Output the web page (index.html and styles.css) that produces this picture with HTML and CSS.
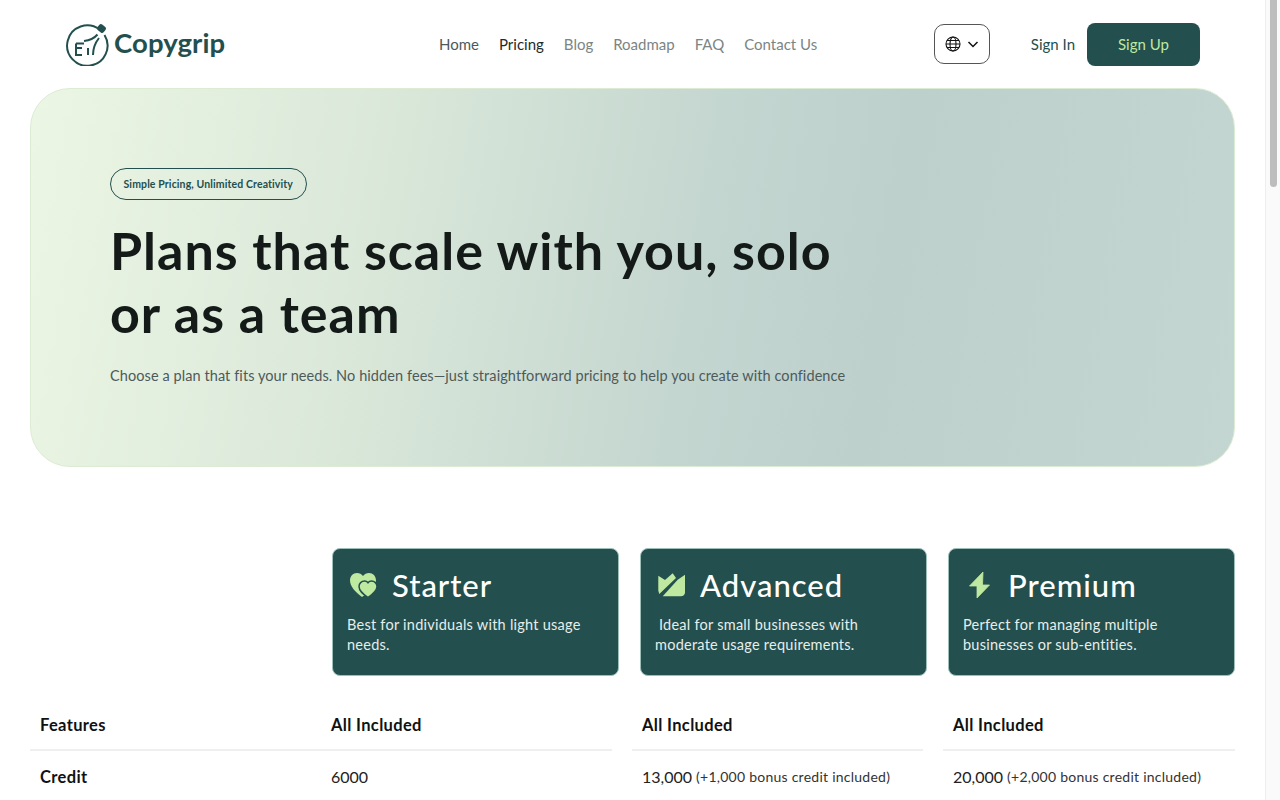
FILE: index.html
```html
<!DOCTYPE html>
<html lang="en">

<head>
    <meta charset="UTF-8">
    <meta name="viewport" content="width=device-width, initial-scale=1.0">
    <title>Copygrip Pricing</title>
    <link rel="stylesheet" href="styles.css">
</head>

<body>

    <header class="header">
        <a class="logo" href="#">
            <svg class="logo-mark" viewBox="0 0 44 44" width="44" height="44" fill="none" stroke="#234f4e" stroke-width="2">
                <path d="M34.5 7.5A20.2 20.2 0 1 0 39.5 13" />
                <path d="M11 21.5H19M11 21.5V26H17M11 26V33H17" />
                <path d="M19 19C24 18.5 29 16.5 32.5 12.5" />
                <path d="M23 26V33" />
                <path d="M28 33C28 27 30 21 34 16" />
                <rect x="32.5" y="3" width="8" height="7" rx="2" transform="rotate(40 36.5 6.5)" fill="#234f4e" stroke="none" />
            </svg>
            <span class="logo-text">Copygrip</span>
        </a>

        <nav class="nav">
            <a href="#">Home</a>
            <a href="#" class="active">Pricing</a>
            <a href="#" class="muted">Blog</a>
            <a href="#" class="muted">Roadmap</a>
            <a href="#" class="muted">FAQ</a>
            <a href="#" class="muted">Contact Us</a>
        </nav>

        <button class="lang-button">
            <svg viewBox="0 0 16 16" width="16" height="16" fill="none" stroke="#111" stroke-width="1.1">
                <circle cx="8" cy="8" r="7" />
                <ellipse cx="8" cy="8" rx="3" ry="7" />
                <path d="M1 8H15M2 4.5H14M2 11.5H14" />
            </svg>
            <svg viewBox="0 0 12 12" width="12" height="12" fill="none" stroke="#111" stroke-width="1.5">
                <path d="M1.5 4L6 8.5L10.5 4" />
            </svg>
        </button>

        <a class="sign-in" href="#">Sign In</a>
        <a class="sign-up" href="#">Sign Up</a>
    </header>

    <main class="main">
        <section class="hero">
            <span class="hero-badge">Simple Pricing, Unlimited Creativity</span>
            <h1 class="hero-title">Plans that scale with you, solo or as a team</h1>
            <p class="hero-text">Choose a plan that fits your needs. No hidden fees—just straightforward pricing to help you create with confidence</p>
        </section>

        <section class="plans">
            <div class="plan">
                <div class="plan-head">
                    <svg class="plan-icon" viewBox="0 0 28 26" width="28" height="26">
                        <path d="M12 25C5 20 0 14 0 8.500C0 4 3 1 7 1C9.500 1 11.500 2.200 13 4C14.500 2.200 16.500 1 19 1C23 1 26 4 26 8.500C26 14 20 20 12 25Z" fill="#bfe8a0" />
                        <path d="M18 25.500C13 22 9 19 9 14.500C9 11.500 11.500 9 14.500 9C16 9 17.200 9.700 18 10.700C18.800 9.700 20 9 21.500 9C24.500 9 27 11.500 27 14.500C27 19 23 22 18 25.500Z" fill="#bfe8a0" stroke="#234f4e" stroke-width="1.500" />
                    </svg>
                    <h2 class="plan-name">Starter</h2>
                </div>
                <p class="plan-text">Best for individuals with light usage needs.</p>
            </div>
            <div class="plan">
                <div class="plan-head">
                    <svg class="plan-icon" viewBox="0 0 28 26" width="28" height="26">
                        <path d="M0.300 3.700L7 8L14.700 1.300L18 6L1.300 22L0.300 18.700Z" fill="#bfe8a0" />
                        <path d="M19.700 7.700L27 2.700V20.300C27 22.800 25.200 24.300 22.700 24.300H4.700Z" fill="#bfe8a0" />
                    </svg>
                    <h2 class="plan-name">Advanced</h2>
                </div>
                <p class="plan-text plan-text-indent">Ideal for small businesses with moderate usage requirements.</p>
            </div>
            <div class="plan">
                <div class="plan-head">
                    <svg class="plan-icon" viewBox="0 0 28 28" width="28" height="28">
                        <path d="M17 1L3.500 15H11V27L23.500 14H16.500Z" fill="#bfe8a0" stroke="#bfe8a0" stroke-width="0.800" stroke-linejoin="round" />
                    </svg>
                    <h2 class="plan-name">Premium</h2>
                </div>
                <p class="plan-text">Perfect for managing multiple businesses or sub-entities.</p>
            </div>
        </section>

        <section class="features">
            <div class="cell cell-label">Features</div>
            <div class="cell cell-head">All Included</div>
            <div class="cell cell-head">All Included</div>
            <div class="cell cell-head">All Included</div>

            <div class="cell cell-label">Credit</div>
            <div class="cell">6000</div>
            <div class="cell">13,000 <small>(+1,000 bonus credit included)</small></div>
            <div class="cell">20,000 <small>(+2,000 bonus credit included)</small></div>
        </section>
    </main>

    <div class="scrollbar">
        <div class="scrollbar-thumb"></div>
    </div>

</body>

</html>
```

FILE: styles.css
```css
body {
    margin: 0;
    padding-right: 15px;
    min-height: 3420px;
    font-family: 'Lato', sans-serif;
    color: #111;
    background-color: #fff;
}

a {
    text-decoration: none;
}

.scrollbar {
    position: fixed;
    top: 0;
    right: 0;
    bottom: 0;
    box-sizing: border-box;
    width: 15px;
    padding: 0 3px 0 4px;
    background-color: #fafafa;
    border-left: 1px solid #eee;
}

.scrollbar-thumb {
    height: 187px;
    background-color: #bdbdbd;
    border-radius: 0 0 4px 4px;
}

.header {
    display: flex;
    align-items: center;
    height: 88px;
    padding: 0 65px;
}

.logo {
    display: flex;
    align-items: center;
    gap: 5px;
    width: 374px;
}

.logo-text {
    padding-bottom: 3px;
    font-size: 27.5px;
    font-weight: 700;
    color: #234f4e;
    letter-spacing: 0.1px;
}

.nav {
    display: flex;
    gap: 20px;
    font-size: 15px;
}

.nav a {
    color: #4d5a5a;
}

.nav a.active {
    color: #1c2b2b;
}

.nav a.muted {
    color: #7b8584;
}

.lang-button {
    display: flex;
    align-items: center;
    justify-content: center;
    gap: 6px;
    width: 56px;
    height: 40px;
    margin-left: auto;
    padding: 0;
    background-color: #fff;
    border: 1px solid #555;
    border-radius: 10px;
}

.sign-in {
    margin-left: 41px;
    font-size: 15px;
    color: #234f4e;
}

.sign-up {
    display: flex;
    align-items: center;
    justify-content: center;
    width: 113px;
    height: 43px;
    margin-left: 12px;
    font-size: 15px;
    color: #bfe8a0;
    background-color: #234f4e;
    border-radius: 8px;
}

.main {
    padding: 0 30px;
}

.hero {
    display: flex;
    flex-direction: column;
    align-items: flex-start;
    box-sizing: border-box;
    height: 379px;
    padding: 79px 79px 0;
    background: linear-gradient(100deg, #ecf6e4 0%, #d9e7d9 30%, #c4d6d0 55%, #bdd0cc 70%, #c3d6d2 100%);
    border: 1px solid #dcebd4;
    border-radius: 40px;
}

.hero-badge {
    display: flex;
    align-items: center;
    box-sizing: border-box;
    height: 32px;
    padding: 0 12.5px;
    font-size: 10.5px;
    font-weight: 700;
    letter-spacing: 0.12px;
    color: #234f4e;
    border: 1px solid #234f4e;
    border-radius: 16px;
}

.hero-title {
    max-width: 760px;
    margin: 19px 0 0;
    font-size: 52px;
    font-weight: 700;
    line-height: 63px;
    letter-spacing: 1px;
    color: #141a18;
}

.hero-text {
    margin: 22px 0 0;
    font-size: 14.5px;
    letter-spacing: 0.08px;
    color: #4d5a5a;
}

.plans {
    display: grid;
    grid-template-columns: repeat(3, 287px);
    justify-content: end;
    column-gap: 21px;
    margin-top: 81px;
}

.plan {
    box-sizing: border-box;
    height: 128px;
    padding: 18px 14px 0 15px;
    color: #fff;
    background-color: #234f4e;
    border: 1px solid #9cc0b8;
    border-radius: 8px;
}

.plan-head {
    display: flex;
    align-items: center;
    gap: 14px;
    height: 36px;
}

.plan-icon {
    flex: none;
    margin-left: 2px;
}

.plan-name {
    margin: 0;
    font-size: 31px;
    font-weight: 500;
    letter-spacing: 1px;
}

.plan-text {
    margin: 12px 0 0 -1px;
    font-size: 14.5px;
    line-height: 20px;
    letter-spacing: 0.25px;
    color: #e6eeec;
}

.plan-text-indent {
    text-indent: 4px;
}

.features {
    display: grid;
    grid-template-columns: 291px 291px 311px 312px;
    margin-top: 25px;
}

.cell {
    display: flex;
    align-items: flex-start;
    gap: 4px;
    box-sizing: border-box;
    height: 50px;
    padding: 14px 0 0 10px;
    font-size: 16px;
    line-height: 20px;
    color: #222;
    border-bottom: 2px solid #efefef;
}

.cell:nth-child(n+5) {
    height: 60px;
    padding-top: 16px;
}

.cell:nth-child(4n+3),
.cell:nth-child(4n) {
    margin-left: 20px;
}

.cell-label,
.cell-head {
    font-size: 16.5px;
    font-weight: 700;
    letter-spacing: 0.35px;
    color: #111;
}

.cell small {
    font-size: 14px;
    letter-spacing: 0.25px;
    color: #333;
}
```
